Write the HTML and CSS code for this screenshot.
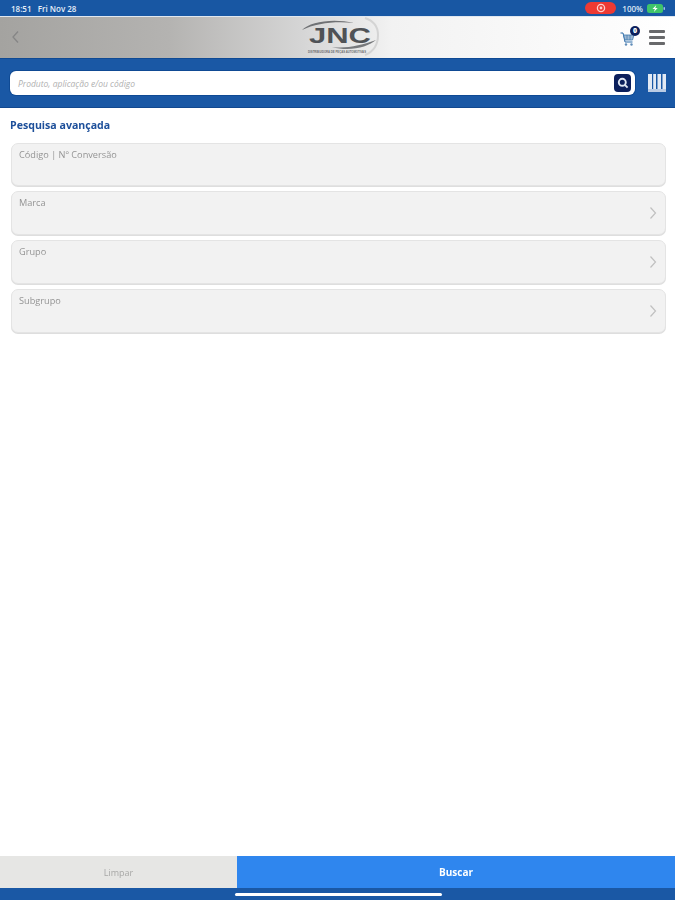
FILE: index.html
```html
<!DOCTYPE html>
<html lang="pt">
<head>
<meta charset="utf-8">
<title>Pesquisa avançada</title>
<link rel="stylesheet" href="styles.css">
</head>
<body>
<div class="app">
  <div class="status">
    <span class="status-time">18:51&nbsp;&nbsp;&nbsp;Fri Nov 28</span>
    <div class="status-right">
      <span class="rec"><svg width="10" height="10" viewBox="0 0 10 10"><circle cx="5" cy="5" r="3.600" fill="none" stroke="#ffd0cc" stroke-width="1.300"/><circle cx="5" cy="5" r="1.400" fill="#ffd0cc"/></svg></span>
      <span class="status-pct">100%</span>
      <svg class="battery" width="18" height="9" viewBox="0 0 18 9"><rect x="0" y="0" width="16" height="9" rx="2.500" fill="#3fc46a"/><rect x="16.500" y="3" width="1.500" height="3" rx=".7" fill="#9fc4e0"/><path d="M9.300 1 5.500 5h2.400L6.900 8l3.800-4H8.300z" fill="#fff"/></svg>
    </div>
  </div>

  <header class="top">
    <svg class="back" width="10" height="16" viewBox="0 0 10 16"><path d="M8 2.500 3 8l5 5.500" fill="none" stroke="#868686" stroke-width="1.300"/></svg>
    <div class="logo">
      <svg width="84" height="40" viewBox="0 0 84 40">
        <path d="M67 1c9 3 13 9 13 17s-3 16-13 20" fill="none" stroke="#d4d4d4" stroke-width="2"/>
        <path d="M4 13C12 5 34 1 56 6 38 4 18 6 4 13z" fill="#6f7174"/>
        <path d="M34 30c14 2 30-2 44-7-8 7-26 12-44 7z" fill="#77797c"/>
        <text class="logo-mark" x="11" y="26" textLength="62" lengthAdjust="spacingAndGlyphs">JNC</text>
        <text class="logo-sub" x="10" y="36" textLength="58" lengthAdjust="spacingAndGlyphs">DISTRIBUIDORA DE PEÇAS AUTOMOTIVAS</text>
      </svg>
    </div>
    <div class="top-actions">
      <span class="cart">
        <svg width="15" height="17" viewBox="0 0 15 17"><path d="M.5 3H3l2 9h7.500" fill="none" stroke="#2b6aa8" stroke-width="1"/><path d="M3.500 5H14l-1.500 5H5z" fill="#9db9d4" stroke="#3f78ae" stroke-width=".8"/><path d="M7 5v5M10 5v5" stroke="#3f78ae" stroke-width=".7"/><circle cx="6" cy="14.500" r="1.200" fill="#5f8cb8"/><circle cx="11.500" cy="14.500" r="1.200" fill="#5f8cb8"/></svg>
        <span class="badge">0</span>
      </span>
      <span class="menu"><i></i><i></i><i></i></span>
    </div>
  </header>

  <div class="searchband">
    <div class="search">
      <span class="search-text">Produto, aplicação e/ou código</span>
      <span class="search-btn"><svg width="12" height="12" viewBox="0 0 12 12"><circle cx="5.300" cy="5.300" r="3.500" fill="none" stroke="#dfe6f2" stroke-width="1.900"/><path d="m8 8 2.600 2.600" stroke="#dfe6f2" stroke-width="1.800"/></svg></span>
    </div>
    <svg class="barcode" width="18" height="19" viewBox="0 0 18 19"><g fill="#e2e9f4"><rect x="0" y="0" width="4" height="15"/><rect x="5.200" y="0" width="2.800" height="15"/><rect x="9.500" y="0" width="3.500" height="15"/><rect x="14.500" y="0" width="3.500" height="15"/><rect x="0" y="15" width="18" height="3" opacity=".8"/></g></svg>
  </div>

  <main class="content">
    <h1 class="title">Pesquisa avançada</h1>
    <div class="fields">
      <div class="field field-first"><span class="label">Código | Nº Conversão</span></div>
      <div class="field"><span class="label">Marca</span><svg class="chev" width="8" height="14" viewBox="0 0 8 14"><path d="m1.500 1.500 5 5.500-5 5.500" fill="none" stroke="#c0c0c0" stroke-width="1.200"/></svg></div>
      <div class="field"><span class="label">Grupo</span><svg class="chev" width="8" height="14" viewBox="0 0 8 14"><path d="m1.500 1.500 5 5.500-5 5.500" fill="none" stroke="#c0c0c0" stroke-width="1.200"/></svg></div>
      <div class="field"><span class="label">Subgrupo</span><svg class="chev" width="8" height="14" viewBox="0 0 8 14"><path d="m1.500 1.500 5 5.500-5 5.500" fill="none" stroke="#c0c0c0" stroke-width="1.200"/></svg></div>
    </div>
  </main>

  <div class="actions">
    <div class="btn-clear">Limpar</div>
    <div class="btn-search">Buscar</div>
  </div>
  <footer class="home"><span class="home-bar"></span></footer>
</div>
</body>
</html>
```

FILE: styles.css
```css
* { box-sizing: border-box; }
html, body { margin: 0; padding: 0; height: 100%; }
body { font-family: "Open Sans", "Noto Sans", sans-serif; background: #fff; }
.app { width: 675px; height: 900px; display: flex; flex-direction: column; overflow: hidden; filter: blur(0.45px); }

.status { height: 16px; flex: none; background: #1857a3; display: flex; align-items: center; justify-content: space-between; padding: 0 10px 0 11px; color: #fff; }
.status-time { font-size: 8px; font-weight: 600; white-space: nowrap; color: #e6eef8; }
.status-right { display: flex; align-items: center; gap: 6px; }
.rec { width: 31px; height: 12px; border-radius: 6px; background: #ee3a33; display: flex; align-items: center; justify-content: center; }
.status-pct { font-size: 8px; font-weight: 600; color: #dce7f4; }
.battery { margin-left: -2px; }

.top { height: 43px; flex: none; background: linear-gradient(90deg, #a4a3a0 0%, #b4b3b1 25%, #d6d6d6 45%, #f2f2f2 58%, #fff 100%); border-top: 1px solid #dfe7f0; border-bottom: 1px solid #0f4a94; display: flex; align-items: center; position: relative; padding: 0 10px; }
.back { margin-top: -1px; }
.logo { position: absolute; left: 298px; top: 0; width: 84px; height: 40px; }
.logo-mark { font: 800 22px "Liberation Sans", sans-serif; fill: #4f5256; }
.logo-sub { font: 700 3.200px "Liberation Sans", sans-serif; fill: #6c6e70; }
.top-actions { margin-left: auto; display: flex; align-items: center; gap: 14px; }
.cart { position: relative; width: 15px; height: 17px; display: block; margin-top: 1px; }
.cart svg { display: block; }
.badge { position: absolute; right: -5px; top: -4px; width: 10px; height: 10px; border-radius: 50%; background: #0b1f5c; color: #fff; font-size: 7px; font-weight: 800; line-height: 10px; text-align: center; }
.menu { width: 16px; display: flex; flex-direction: column; gap: 3px; }
.menu i { display: block; height: 3px; background: #68696b; border-radius: 1px; }

.searchband { height: 49px; flex: none; background: #1a58a5; border-bottom: 1px solid #12488f; display: flex; align-items: center; padding: 0 9px 0 10px; gap: 13px; }
.search { flex: 1; height: 24px; background: #fff; border-radius: 6px; display: flex; align-items: center; justify-content: space-between; padding: 0 4px 0 8px; box-shadow: 0 0 0 1px #0f4a94; }
.search-text { font-size: 8.500px; font-style: italic; color: #b0b0b0; }
.search-btn { width: 17px; height: 18px; border-radius: 4px; background: #0b1f5c; display: flex; align-items: center; justify-content: center; }
.barcode { flex: none; }

.content { flex: 1; padding: 10px 9px 0 11px; }
.title { margin: 0 0 11px -1px; font-size: 10.600px; line-height: 14px; font-weight: 700; color: #1d4f9a; }
.fields { display: flex; flex-direction: column; gap: 5px; }
.field { height: 44px; background: #f2f2f2; border: 1px solid #e4e4e4; border-radius: 7px; padding: 4px 8px 0 7px; position: relative; box-shadow: 0 1px 0 #dedede; }
.field-first { height: 43px; }
.label { font-size: 9.200px; line-height: 13px; color: #949494; display: block; }
.chev { position: absolute; right: 8px; top: 14px; }

.actions { height: 32px; flex: none; display: flex; }
.btn-clear { width: 237px; background: #e6e6e4; color: #a8a8a6; font-size: 9px; display: flex; align-items: center; justify-content: center; }
.btn-search { flex: 1; background: #2f86ee; color: #fff; font-size: 10px; font-weight: 700; display: flex; align-items: center; justify-content: center; }
.home { height: 12px; flex: none; background: #1a58a5; display: flex; justify-content: center; align-items: center; padding-left: 1px; }
.home-bar { width: 207px; height: 3px; border-radius: 2px; background: #fff; }
```
